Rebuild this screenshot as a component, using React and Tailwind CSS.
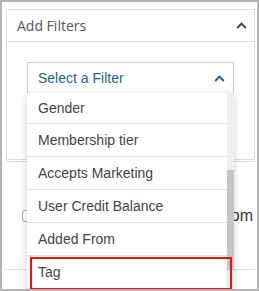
const items = ['Gender', 'Membership tier', 'Accepts Marketing', 'User Credit Balance', 'Added From', 'Tag'];

const Caret = ({ color }) => (
  <svg width="11" height="7" viewBox="0 0 11 7" fill="none">
    <polyline points="1.2,6 5.5,1.6 9.8,6" stroke={color} strokeWidth="2" />
  </svg>
);

const App = () => {
  return (
    <div className="relative w-[259px] h-[291px] overflow-hidden border-2 border-[#b4b4b4] bg-white pt-[7px] pl-[4px] pr-[2px]">
      <div className="border border-[#dcdcdc]">
        <div className="h-[32px] flex items-center justify-between border-b border-[#dcdcdc] pl-[10px] pr-[7px]">
          <span className="text-[14px] text-[#555555] font-['Open_Sans',sans-serif]">Add Filters</span>
          <Caret color="#444444" />
        </div>
        <div className="h-[117px] px-[20px] pt-[20px]">
          <div className="relative">
            <div className="h-[32px] flex items-center justify-between border border-[#cccccc] pl-[10px] pr-[8px] font-['Liberation_Sans',Arial,sans-serif]">
              <span className="text-[14px] text-[#1f5f9e]">Select a Filter</span>
              <Caret color="#1f5f9e" />
            </div>
          </div>
        </div>
      </div>
      <div className="mt-px border-t border-[#dcdcdc] h-[108px] flex items-center pl-[16px] pr-[2px] font-['Liberation_Sans',Arial,sans-serif]">
        <span className="shrink-0 w-[13px] h-[12px] rounded-[3px] border border-[#aaaaaa] bg-white" />
        <div className="flex-1 flex justify-end overflow-hidden ml-[8px]">
          <span className="shrink-0 whitespace-nowrap text-[16px] text-[#333333]">Only show customers from</span>
        </div>
      </div>
      <div className="border-t border-[#dcdcdc]" />

      <div className="absolute left-[25px] top-[91px] w-[207px] h-[200px] bg-white shadow-[0_2px_8px_rgba(0,0,0,0.18)] flex font-['Liberation_Sans',Arial,sans-serif]">
        <div className="flex-1">
          {items.map((item, i) => (
            <div
              key={item}
              className={`${i === 0 ? 'h-[31px]' : 'h-[33px]'} flex items-center border-b border-[#e0e0e0] pl-[11px] text-[14px] text-[#444444]`}
            >
              {item}
            </div>
          ))}
        </div>
        <div className="w-[7px] bg-[#eeeeee]">
          <div className="mt-[77px] h-[100px] bg-[#c4c4c4]" />
        </div>
      </div>

      <div className="absolute left-[28px] top-[255px] w-[202px] h-[33px] border-2 border-[#ee1111]" />
    </div>
  );
};

export default App;
